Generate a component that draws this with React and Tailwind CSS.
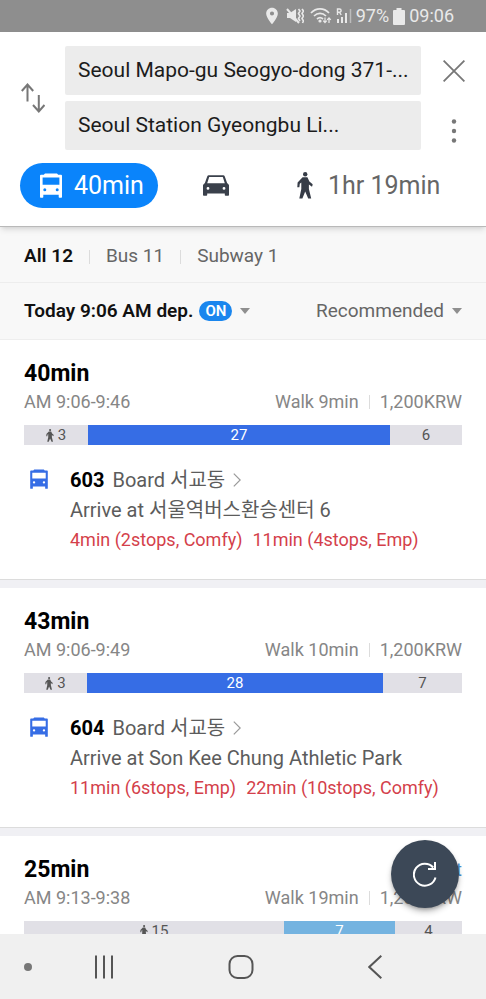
import React, { useState } from 'react';
import { MdLocationOn } from 'react-icons/md';

const routes = [
  {
    id: 1,
    duration: '40min',
    time: 'AM 9:06-9:46',
    walk: 'Walk 9min',
    fare: '1,200KRW',
    segments: [
      { type: 'walk', label: '3', size: 64 },
      { type: 'bus', label: '27', size: 302 },
      { type: 'rest', label: '6', size: 72 },
    ],
    bus: '603',
    stop: '서교동',
    arrive: '서울역버스환승센터 6',
    arrivals: ['4min (2stops, Comfy)', '11min (4stops, Emp)'],
  },
  {
    id: 2,
    duration: '43min',
    time: 'AM 9:06-9:49',
    walk: 'Walk 10min',
    fare: '1,200KRW',
    segments: [
      { type: 'walk', label: '3', size: 63 },
      { type: 'bus', label: '28', size: 296 },
      { type: 'rest', label: '7', size: 79 },
    ],
    bus: '604',
    stop: '서교동',
    arrive: 'Son Kee Chung Athletic Park',
    arrivals: ['11min (6stops, Emp)', '22min (10stops, Comfy)'],
  },
  {
    id: 3,
    duration: '25min',
    tag: 't',
    time: 'AM 9:13-9:38',
    walk: 'Walk 19min',
    fare: '1,200KRW',
    segments: [
      { type: 'walk', label: '15', size: 260 },
      { type: 'subway', label: '7', size: 111 },
      { type: 'rest', label: '4', size: 67 },
    ],
  },
];

const segmentStyles = {
  walk: 'bg-[#e1e0e6] text-[#555]',
  rest: 'bg-[#e1e0e6] text-[#555]',
  bus: 'bg-[#366de5] text-white',
  subway: 'bg-[#74b3e0] text-white',
};

const BusIcon = ({ className }) => (
  <svg viewBox="0 0 22 25" fill="currentColor" className={className} aria-hidden="true">
    <path
      fillRule="evenodd"
      d="M5 0.6h12l1.2 1.2H21a1 1 0 0 1 1 1V24a.7.7 0 0 1-.7.7h-1.900a.7.7 0 0 1-.7-.7v-2.200H3.300V24a.7.7 0 0 1-.7.7H.7A.7.7 0 0 1 0 24V2.800a1 1 0 0 1 1-1h2.800zM2.600 4.600v7.200h16.800V4.600zM4.800 15.200a1.500 1.500 0 1 0 0 3 1.500 1.500 0 0 0 0-3zm12.400 0a1.500 1.500 0 1 0 0 3 1.500 1.500 0 0 0 0-3z"
    />
  </svg>
);

const CarIcon = ({ className }) => (
  <svg viewBox="0 0 26 21" fill="currentColor" className={className} aria-hidden="true">
    <path
      fillRule="evenodd"
      d="M5.800 0.300h14.400a1.800 1.800 0 0 1 1.600 1.100l2.300 6.600 1.500 1.500a1.200 1.200 0 0 1 .4.900V20a.8.8 0 0 1-.8.8h-2.600a.8.8 0 0 1-.8-.8v-1.600H4.200V20a.8.8 0 0 1-.8.8H.8A.8.8 0 0 1 0 20v-9.600a1.200 1.200 0 0 1 .4-.9L1.900 8l2.300-6.600A1.800 1.800 0 0 1 5.800.3zM6.200 1.900 4.200 8.200h17.600l-2-6.300zM5 12a1.400 1.400 0 1 0 0 2.800A1.400 1.400 0 0 0 5 12zm16 0a1.400 1.400 0 1 0 0 2.800 1.400 1.400 0 0 0 0-2.800z"
    />
  </svg>
);

const WalkIcon = ({ className }) => (
  <svg viewBox="0 0 16 27" fill="currentColor" className={className} aria-hidden="true">
    <circle cx="8.200" cy="2.300" r="2.200" />
    <path d="M5.600 5.200h4.800l2 4.200 3 2.700a.9.900 0 0 1 .1 1.100l-.5 1.600-3.100-2.200v4.300l2.300 9.700h-3L8.200 19.500 5.400 26.600H2.300l2-9.600V10.600l-1.500 1.200-.4 3.400H.3l.3-4.700z" />
  </svg>
);

const StatusBar = () => (
  <div className="flex h-8 shrink-0 items-center justify-end bg-[#8e8e8e] pr-8 text-[#e9e9e9]">
    <MdLocationOn className="mr-1 size-5" />
    <svg viewBox="0 0 18 18" className="mr-1.5 size-[18px]" fill="none" stroke="currentColor" strokeWidth="1.600" aria-hidden="true">
      <path d="M1 6h3l6-4v13l-6-4H1z" fill="currentColor" stroke="none" />
      <path d="m1 2 12 14" strokeWidth="2" />
      <path d="m12.500 2 1.500 2-1.500 2.500L14 9l-1.500 2.500 1.500 2.500M16 2l1.500 2L16 6.500 17.500 9 16 11.500l1.500 2.500-1 2" />
    </svg>
    <svg viewBox="0 0 22 18" className="mr-1 h-[18px] w-[22px]" fill="none" stroke="currentColor" strokeWidth="1.700" aria-hidden="true">
      <path d="M1 6c5-5.500 13-5.500 18 0M4 9c3.500-3.500 8.500-3.500 12 0M7 12c2-1.800 4-1.800 6 0" />
      <circle cx="10" cy="14" r="1.600" fill="currentColor" stroke="none" />
      <path d="M15 10.500v5m-1.800-1.800 1.800 2 1.800-2M19 16v-5m-1.800 1.800 1.800-2 1.800 2" strokeWidth="1.200" />
    </svg>
    <svg viewBox="0 0 16 18" className="mr-1 h-[18px] w-4" fill="none" stroke="currentColor" aria-hidden="true">
      <path d="M1.500 8V2h2a1.500 1.500 0 0 1 0 3.200h-2m2 0L5.200 8" strokeWidth="1.400" />
      <path d="M2 16v-4M6 16v-6M10 16V6" strokeWidth="2" />
      <path d="M14.500 16V2" strokeWidth="1.500" opacity="0.500" />
    </svg>
    <span className="text-lg leading-8">97%</span>
    <svg viewBox="0 0 12 17" className="mx-1 h-[17px] w-3" fill="currentColor" aria-hidden="true">
      <path d="M3.500 0h5v2H11a1 1 0 0 1 1 1v13a1 1 0 0 1-1 1H1a1 1 0 0 1-1-1V3a1 1 0 0 1 1-1h2.500z" />
    </svg>
    <span className="text-lg leading-8">09:06</span>
  </div>
);

const Header = () => {
  const [places, setPlaces] = useState({
    from: 'Seoul Mapo-gu Seogyo-dong 371-...',
    to: 'Seoul Station Gyeongbu Li...',
  });

  const handleChange = (e) => {
    const { name, value } = e.target;
    setPlaces(prev => ({ ...prev, [name]: value }));
  };

  return (
    <header className="relative z-10 shrink-0 border-b border-[#b9b9b9] bg-white pb-[18px] pt-[14px] shadow-md shadow-black/10">
      <div className="flex items-center">
        <button type="button" aria-label="Swap" className="flex w-[65px] shrink-0 justify-center text-[#777]">
          <svg viewBox="0 0 24 30" className="h-[30px] w-6" fill="none" stroke="currentColor" strokeWidth="2" aria-hidden="true">
            <path d="M6.500 18.500V1.500M.8 8l5.700-6.500L12.200 8M17.800 12v16.500M12 22l5.800 6.500L23.500 22" />
          </svg>
        </button>
        <div className="flex min-w-0 flex-1 flex-col gap-1.5">
          <input
            type="text"
            name="from"
            aria-label="From"
            value={places.from}
            onChange={handleChange}
            className="h-[49px] w-full rounded-xs bg-[#ececec] pb-0.5 pl-[13px] text-[21px] text-[#1c1c1c]"
          />
          <input
            type="text"
            name="to"
            aria-label="To"
            value={places.to}
            onChange={handleChange}
            className="h-[49px] w-full rounded-xs bg-[#ececec] pb-0.5 pl-[13px] text-[21px] text-[#1c1c1c]"
          />
        </div>
        <div className="flex w-[65px] shrink-0 flex-col items-center gap-1.5 text-[#777]">
          <button type="button" aria-label="Close" className="flex h-[49px] items-center">
            <svg viewBox="0 0 22 22" className="size-[22px]" stroke="currentColor" strokeWidth="1.800" aria-hidden="true">
              <path d="m.6.6 20.800 20.800M21.400.6.6 21.400" />
            </svg>
          </button>
          <button type="button" aria-label="More" className="flex h-[49px] items-end pb-1.5">
            <svg viewBox="0 0 6 26" className="h-[26px] w-1.5" fill="currentColor" aria-hidden="true">
              <circle cx="3" cy="3.500" r="2.200" />
              <circle cx="3" cy="13" r="2.200" />
              <circle cx="3" cy="22.500" r="2.200" />
            </svg>
          </button>
        </div>
      </div>

      <nav className="mt-[13px] flex items-center pl-5 text-[25px] text-[#666]">
        <button type="button" className="flex h-[45px] items-center gap-3 rounded-full bg-[#0a84fb] pl-5 pr-[14px] text-white">
          <BusIcon className="h-[25px] w-[22px]" />
          40min
        </button>
        <button type="button" aria-label="Car" className="ml-[45px] text-[#3a404b]">
          <CarIcon className="h-[21px] w-[26px]" />
        </button>
        <button type="button" className="ml-[68px] flex items-center gap-[15px]">
          <WalkIcon className="h-[27px] w-4 text-[#363c47]" />
          1hr 19min
        </button>
      </nav>
    </header>
  );
};

const Caret = () => (
  <svg viewBox="0 0 10 6" className="h-1.5 w-2.5 text-[#8f8f8f]" fill="currentColor" aria-hidden="true">
    <path d="M0 0h10L5 6z" />
  </svg>
);

const Filters = () => {
  const [sort, setSort] = useState('Recommended');

  return (
    <div className="shrink-0 bg-[#f8f8f8] text-[19px] text-[#666]">
      <div className="flex h-14 items-center border-b border-[#ededed] px-6 pt-1">
        <button type="button" className="font-semibold text-[#111]">All 12</button>
        <span className="mx-4 h-3.5 w-px bg-[#dcdcdc]" />
        <button type="button">Bus 11</button>
        <span className="mx-4 h-3.5 w-px bg-[#dcdcdc]" />
        <button type="button">Subway 1</button>
      </div>
      <div className="flex h-[57px] items-center justify-between border-b border-[#eee] px-6">
        <button type="button" className="flex items-center font-semibold text-[#111]">
          Today 9:06 AM dep.
          <span className="ml-1.5 mr-2 rounded-full bg-[#1a86ee] px-1.5 text-[15px] leading-5 text-white">ON</span>
          <Caret />
        </button>
        <label className="flex items-center gap-2">
          <select
            aria-label="Sort"
            value={sort}
            onChange={(e) => setSort(e.target.value)}
            className="appearance-none"
          >
            <option>Recommended</option>
          </select>
          <Caret />
        </label>
      </div>
    </div>
  );
};

const SegmentBar = ({ segments }) => (
  <div className="mt-[9px] flex h-5 text-[15px] leading-5">
    {segments.map((segment, i) => (
      <div
        key={i}
        className={`flex basis-0 items-center justify-center ${segmentStyles[segment.type]}`}
        style={{ flexGrow: segment.size }}
      >
        {segment.type === 'walk' && <WalkIcon className="mr-1 h-[13px] w-2" />}
        {segment.label}
      </div>
    ))}
  </div>
);

const RouteCard = ({ route }) => (
  <li className="border-b-8 border-[#f0f0f4] bg-white">
    <div className="border-b border-[#dcdcdc] px-6 pb-6 pt-5">
      <div className="flex items-center justify-between">
        <h2 className="text-[23px] font-bold leading-7 text-black">{route.duration}</h2>
        {route.tag && <span className="text-lg leading-7 text-[#4a8fd0]">{route.tag}</span>}
      </div>
      <div className="flex items-center text-lg leading-7 text-[#868686]">
        <span className="flex-1">{route.time}</span>
        <span>{route.walk}</span>
        <span className="mx-2.5 h-3.5 w-px bg-[#dcdcdc]" />
        <span>{route.fare}</span>
      </div>
      <SegmentBar segments={route.segments} />
      {route.bus && (
        <div className="mt-5 flex text-xl leading-[30px] text-[#5c5c5c]">
          <BusIcon className="ml-1.5 mr-[22px] mt-1 h-5 w-[18px] shrink-0 text-[#366de5]" />
          <div className="min-w-0">
            <a href="#stop" className="flex items-center">
              <b className="mr-2 font-bold text-black">{route.bus}</b>
              Board {route.stop}
              <svg viewBox="0 0 8 14" className="ml-2 h-3.5 w-2" fill="none" stroke="#999" strokeWidth="1.200" aria-hidden="true">
                <path d="m.8.6 6.400 6.400L.8 13.400" />
              </svg>
            </a>
            <p>Arrive at {route.arrive}</p>
            <p className="flex gap-2.5 text-lg leading-[30px] text-[#d43f4b]">
              {route.arrivals.map(arrival => (
                <span key={arrival}>{arrival}</span>
              ))}
            </p>
          </div>
        </div>
      )}
    </div>
  </li>
);

const BottomNav = () => (
  <nav className="flex h-[65px] shrink-0 items-center bg-[#f0f0f0] pl-6 text-[#555]">
    <span className="size-2 rounded-full bg-[#777]" />
    <div className="flex flex-1 items-center justify-between pl-[62px] pr-[104px]">
      <button type="button" aria-label="Recent apps">
        <svg viewBox="0 0 20 24" className="h-6 w-5" stroke="currentColor" strokeWidth="2" aria-hidden="true">
          <path d="M2 .5v23M10 .5v23M18 .5v23" />
        </svg>
      </button>
      <button type="button" aria-label="Home">
        <svg viewBox="0 0 26 24" className="h-6 w-[26px]" fill="none" stroke="currentColor" strokeWidth="2" aria-hidden="true">
          <rect x="1.500" y="1" width="23" height="22" rx="8" />
        </svg>
      </button>
      <button type="button" aria-label="Back">
        <svg viewBox="0 0 14 24" className="h-6 w-3.5" fill="none" stroke="currentColor" strokeWidth="2" aria-hidden="true">
          <path d="M13.300.8 1.300 12l12 11.200" />
        </svg>
      </button>
    </div>
  </nav>
);

const App = () => {
  return (
    <div className="flex h-screen flex-col bg-white font-['Roboto','Noto_Sans_CJK_KR',sans-serif]">
      <StatusBar />
      <Header />
      <Filters />
      <main className="relative min-h-0 flex-1 overflow-hidden">
        <ul>
          {routes.map(route => (
            <RouteCard key={route.id} route={route} />
          ))}
        </ul>
        <button
          type="button"
          aria-label="Refresh"
          className="absolute bottom-[26px] right-[27px] flex size-[68px] items-center justify-center rounded-full bg-[#3c4857] text-white shadow-md shadow-black/30"
        >
          <svg viewBox="0 0 24 26" className="h-[26px] w-6" fill="none" stroke="currentColor" strokeWidth="2" aria-hidden="true">
            <path d="M22.500 16.500a11 11 0 1 1-2.300-10" />
            <path d="M22 1v7h-7" />
          </svg>
        </button>
      </main>
      <BottomNav />
    </div>
  );
};

export default App;
